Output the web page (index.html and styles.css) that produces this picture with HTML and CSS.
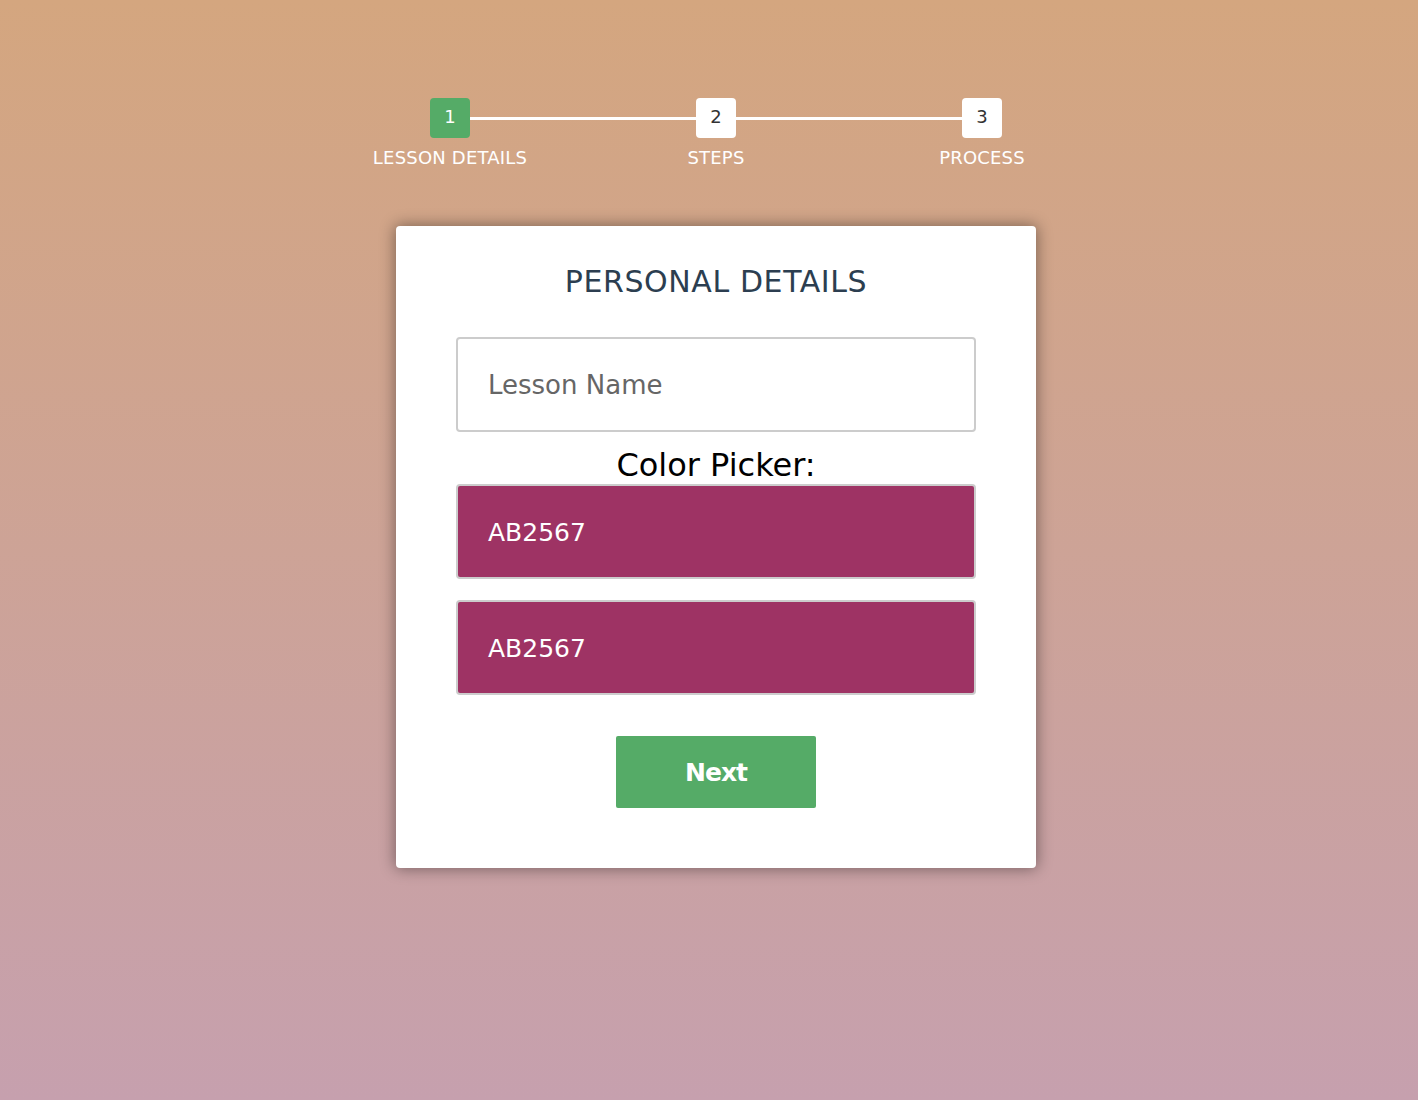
FILE: index.html
```html
<!DOCTYPE html>
<html lang="en">
<head>
<meta charset="utf-8">
<title>Lesson Details</title>
<link rel="stylesheet" href="styles.css">
</head>
<body>
<div class="page">
  <div class="stepper">
    <div class="step-row">
      <span class="step-box active">1</span>
      <span class="step-line"></span>
      <span class="step-box">2</span>
      <span class="step-line"></span>
      <span class="step-box">3</span>
    </div>
    <div class="label-row">
      <span class="step-label">LESSON DETAILS</span>
      <span class="step-label">STEPS</span>
      <span class="step-label">PROCESS</span>
    </div>
  </div>

  <form class="card">
    <h2 class="card-title">PERSONAL DETAILS</h2>
    <input class="text-input" type="text" placeholder="Lesson Name">
    <div class="picker-label">Color Picker:</div>
    <div class="color-box">AB2567</div>
    <div class="color-box">AB2567</div>
    <button class="next-btn" type="button">Next</button>
  </form>
</div>
</body>
</html>
```
FILE: styles.css
```css
* { box-sizing: border-box; }

html, body { height: 100%; }

body {
  margin: 0;
  padding-left: 14px;
  font-family: "DejaVu Sans", "Open Sans", sans-serif;
  background: linear-gradient(#d4a67f, #c6a0ae);
  min-height: 1100px;
}

.page {
  display: flex;
  flex-direction: column;
  align-items: center;
  padding-top: 98px;
}

.stepper {
  display: flex;
  flex-direction: column;
  align-items: center;
}

.step-row {
  display: flex;
  align-items: center;
  width: 572px;
}

.step-box {
  width: 40px;
  height: 40px;
  border-radius: 4px;
  background: #fff;
  color: #333;
  font-size: 18px;
  padding-bottom: 3px;
  display: flex;
  align-items: center;
  justify-content: center;
  flex: none;
}

.step-box.active {
  background: #55ab67;
  color: #fff;
}

.step-line {
  flex: 1;
  height: 3px;
  background: #fff;
}

.label-row {
  display: grid;
  grid-template-columns: repeat(3, 266px);
  margin-top: 10px;
}

.step-label {
  text-align: center;
  color: #fff;
  font-size: 18px;
  line-height: 20px;
  letter-spacing: 0.2px;
}

.card {
  margin-top: 58px;
  width: 640px;
  background: #fff;
  border-radius: 4px;
  box-shadow: 0 0 15px 1px rgba(0, 0, 0, 0.4);
  padding: 38px 60px 60px;
  display: flex;
  flex-direction: column;
  align-items: center;
}

.card-title {
  margin: 0;
  font-weight: normal;
  font-size: 30px;
  line-height: 36px;
  letter-spacing: 0.6px;
  color: #2c3e50;
  text-align: center;
}

.text-input {
  margin-top: 37px;
  width: 100%;
  height: 95px;
  border: 2px solid #ccc;
  border-radius: 4px;
  padding: 0 30px;
  font-family: inherit;
  font-size: 26px;
  color: #2c3e50;
  outline: none;
}

.text-input::placeholder { color: #666; }

.picker-label {
  margin-top: 15px;
  font-size: 32px;
  line-height: 37px;
  color: #000;
  text-align: center;
}

.color-box {
  width: 100%;
  height: 95px;
  background: #9e3364;
  border: 2px solid #ccc;
  border-radius: 4px;
  padding: 2px 30px 0;
  display: flex;
  align-items: center;
  color: #fff;
  font-size: 25px;
}

.color-box + .color-box { margin-top: 21px; }

.next-btn {
  margin-top: 41px;
  width: 200px;
  height: 72px;
  border: none;
  border-radius: 2px;
  background: #55ab67;
  color: #fff;
  font-family: inherit;
  font-size: 25px;
  font-weight: bold;
  letter-spacing: -1px;
  padding-top: 2px;
}
```
